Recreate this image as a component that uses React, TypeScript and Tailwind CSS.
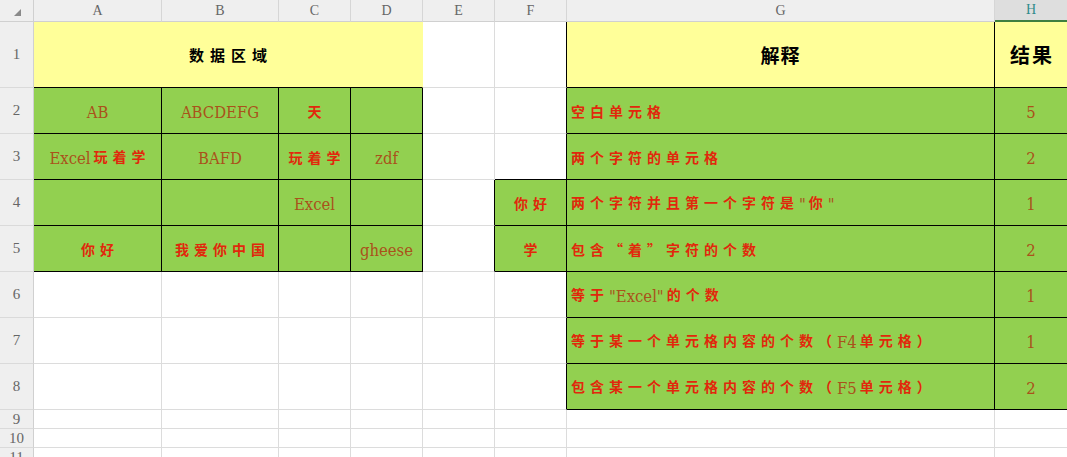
import React from 'react';

type Side = 'g' | 'k' | 'y' | 'n';

const RIGHT: Record<Side, string> = {
  g: 'border-r-[#dcdcdc]',
  k: 'border-r-black',
  y: 'border-r-[#ffff99]',
  n: 'border-r-[#92d050]',
};
const BOTTOM: Record<Side, string> = {
  g: 'border-b-[#dcdcdc]',
  k: 'border-b-black',
  y: 'border-b-[#ffff99]',
  n: 'border-b-[#92d050]',
};

const LATIN =
  "relative top-[2px] font-['DejaVu_Serif_Condensed','DejaVu_Serif','Liberation_Serif',serif] font-stretch-condensed text-[16.5px] text-[#a9521b]";
const CJK = "font-['Noto_Sans_CJK_SC',sans-serif] font-bold text-[14px] tracking-[5px] text-[#e1280c]";

const Txt = ({ s }: { s: string }) => {
  const parts = s.match(/[\x00-\x7f]+|[^\x00-\x7f]+/g) ?? [];
  return (
    <>
      {parts.map((p, i) =>
        /^[\x00-\x7f]/.test(p) ? (
          <span key={i} className={`${LATIN} ${i < parts.length - 1 ? 'mr-[3px]' : ''}`}>{p}</span>
        ) : (
          <span key={i} className={`${CJK} ${i === parts.length - 1 ? 'mr-[-5px]' : ''}`}>{p}</span>
        )
      )}
    </>
  );
};

type CellProps = {
  children?: React.ReactNode;
  r?: Side;
  b?: Side;
  bg?: string;
  align?: string;
  colSpan?: number;
};

const Cell = ({ children, r = 'g', b = 'g', bg = '', align = 'text-center', colSpan }: CellProps) => (
  <td
    colSpan={colSpan}
    className={`p-0 border-r border-b border-t-0 border-l-0 border-solid whitespace-nowrap overflow-hidden align-middle leading-none ${RIGHT[r]} ${BOTTOM[b]} ${bg} ${align}`}
  >
    {children}
  </td>
);

const RowHead = ({ n }: { n: number }) => (
  <td className="p-0 bg-[#efefef] border-r border-b border-solid border-r-[#d0d0d0] border-b-[#dadada] text-center align-middle leading-none font-['Liberation_Serif',serif] text-[15px] text-[#666]">
    {n}
  </td>
);

const GREEN = 'bg-[#92d050]';
const YELLOW = 'bg-[#ffff99]';

const letters = ['A', 'B', 'C', 'D', 'E', 'F', 'G'];

const gRows: { text: string; num: string }[] = [
  { text: '空白单元格', num: '5' },
  { text: '两个字符的单元格', num: '2' },
  { text: '两个字符并且第一个字符是"你"', num: '1' },
  { text: '包含“着”字符的个数', num: '2' },
  { text: '等于"Excel"的个数', num: '1' },
  { text: '等于某一个单元格内容的个数（F4单元格）', num: '1' },
  { text: '包含某一个单元格内容的个数（F5单元格）', num: '2' },
];

const GH = ({ i }: { i: number }) => (
  <>
    <Cell r="k" b="k" bg={GREEN} align="text-left pl-[4px]">
      <Txt s={gRows[i].text} />
    </Cell>
    <Cell r="k" b="k" bg={GREEN}>
      <span className={LATIN}>{gRows[i].num}</span>
    </Cell>
  </>
);

export default function App() {
  return (
    <div className="w-[1067px] h-[457px] overflow-hidden bg-white">
      <table className="table-fixed border-separate border-spacing-0 w-[1068px]">
        <colgroup>
          <col className="w-[34px]" />
          <col className="w-[128px]" />
          <col className="w-[117px]" />
          <col className="w-[72px]" />
          <col className="w-[72px]" />
          <col className="w-[72px]" />
          <col className="w-[72px]" />
          <col className="w-[428px]" />
          <col className="w-[73px]" />
        </colgroup>
        <tbody>
          <tr className="h-[22px]">
            <td className="p-0 bg-[#efefef] border-r border-b border-solid border-r-[#d0d0d0] border-b-[#d0d0d0] relative">
              <svg className="absolute left-[14px] top-[9px]" width="7" height="7" viewBox="0 0 7 7">
                <polygon points="7,0 7,7 0,7" fill="#8a8a8a" />
              </svg>
            </td>
            {letters.map((l) => (
              <td
                key={l}
                className="p-0 bg-[#efefef] border-r border-b border-solid border-r-[#d6d6d6] border-b-[#d0d0d0] text-center align-middle leading-none font-['Liberation_Serif',serif] text-[14px] text-[#666]"
              >
                {l}
              </td>
            ))}
            <td className="p-0 bg-[#dedede] border-r border-b-2 border-solid border-r-[#d6d6d6] border-b-[#3f7f3f] text-center align-middle leading-none font-['Liberation_Serif',serif] text-[14px] text-[#2e8b8b]">
              H
            </td>
          </tr>

          <tr className="h-[66px]">
            <RowHead n={1} />
            <Cell colSpan={4} r="y" b="k" bg={YELLOW}>
              <span className="font-['Noto_Sans_CJK_SC',sans-serif] font-bold text-[15px] tracking-[6px] mr-[-6px] text-black">
                数据区域
              </span>
            </Cell>
            <Cell />
            <Cell r="k" />
            <Cell r="k" b="k" bg={YELLOW}>
              <span className="font-['Noto_Sans_CJK_SC',sans-serif] font-bold text-[19px] tracking-[1px] text-black">
                解释
              </span>
            </Cell>
            <Cell r="k" b="k" bg={YELLOW}>
              <span className="font-['Noto_Sans_CJK_SC',sans-serif] font-bold text-[20px] tracking-[2px] mr-[-2px] text-black">
                结果
              </span>
            </Cell>
          </tr>

          <tr className="h-[46px]">
            <RowHead n={2} />
            <Cell r="k" b="k" bg={GREEN}><Txt s="AB" /></Cell>
            <Cell r="k" b="k" bg={GREEN}><Txt s="ABCDEFG" /></Cell>
            <Cell r="k" b="k" bg={GREEN}><Txt s="天" /></Cell>
            <Cell r="k" b="k" bg={GREEN} />
            <Cell />
            <Cell r="k" />
            <GH i={0} />
          </tr>

          <tr className="h-[46px]">
            <RowHead n={3} />
            <Cell r="k" b="k" bg={GREEN}><Txt s="Excel玩着学" /></Cell>
            <Cell r="k" b="k" bg={GREEN}><Txt s="BAFD" /></Cell>
            <Cell r="k" b="k" bg={GREEN}><Txt s="玩着学" /></Cell>
            <Cell r="k" b="k" bg={GREEN}><Txt s="zdf" /></Cell>
            <Cell />
            <Cell r="k" b="k" />
            <GH i={1} />
          </tr>

          <tr className="h-[46px]">
            <RowHead n={4} />
            <Cell r="k" b="k" bg={GREEN} />
            <Cell r="k" b="k" bg={GREEN} />
            <Cell r="k" b="k" bg={GREEN}><Txt s="Excel" /></Cell>
            <Cell r="k" b="k" bg={GREEN} />
            <Cell r="k" />
            <Cell r="k" b="k" bg={GREEN}><Txt s="你好" /></Cell>
            <GH i={2} />
          </tr>

          <tr className="h-[46px]">
            <RowHead n={5} />
            <Cell r="k" b="k" bg={GREEN}><Txt s="你好" /></Cell>
            <Cell r="k" b="k" bg={GREEN}><Txt s="我爱你中国" /></Cell>
            <Cell r="k" b="k" bg={GREEN} />
            <Cell r="k" b="k" bg={GREEN}><Txt s="gheese" /></Cell>
            <Cell r="k" />
            <Cell r="k" b="k" bg={GREEN}><Txt s="学" /></Cell>
            <GH i={3} />
          </tr>

          {[6, 7, 8].map((n) => (
            <tr key={n} className="h-[46px]">
              <RowHead n={n} />
              <Cell />
              <Cell />
              <Cell />
              <Cell />
              <Cell />
              <Cell r="k" />
              <GH i={n - 2} />
            </tr>
          ))}

          {[9, 10, 11].map((n) => (
            <tr key={n} className="h-[19px]">
              <RowHead n={n} />
              <Cell />
              <Cell />
              <Cell />
              <Cell />
              <Cell />
              <Cell />
              <Cell />
              <Cell />
            </tr>
          ))}
        </tbody>
      </table>
    </div>
  );
}
